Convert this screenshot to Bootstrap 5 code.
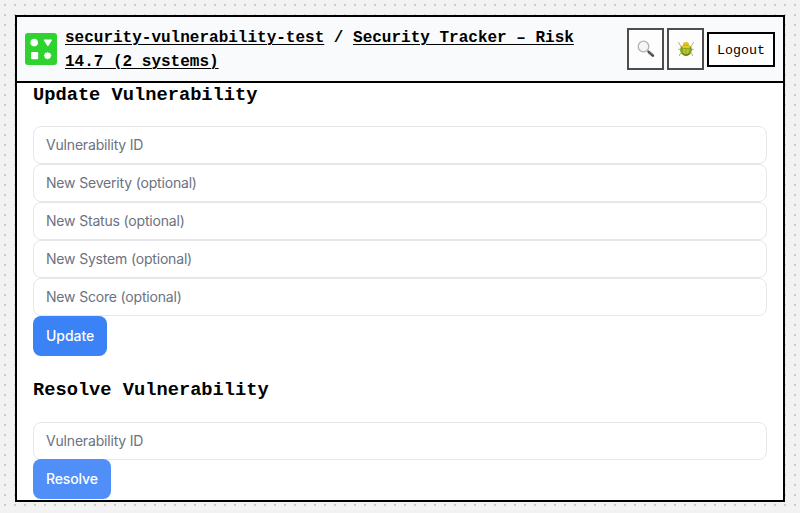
<!DOCTYPE html>
<html lang="en">
<head>
<meta charset="utf-8">
<meta name="viewport" content="width=device-width, initial-scale=1">
<title>Security Tracker</title>
<link rel="stylesheet" href="https://cdn.jsdelivr.net/npm/bootstrap@5.3.0/dist/css/bootstrap.min.css">
<style>
body{height:513px;padding:15px;overflow:hidden;color:#000;font-family:"Liberation Mono",monospace;
 background:url("data:image/svg+xml,%3Csvg xmlns='http://www.w3.org/2000/svg' width='10' height='10'%3E%3Crect x='4' y='4' width='2' height='2' fill='%23ccc'/%3E%3C/svg%3E") #f2f2f2}
.panel{height:487px;border:2px solid #000;background:#fff;overflow:hidden}
.topbar{height:66px;padding:0 8px;border-bottom:2px solid #000;background:#f9fafc}
.crumbs{font-size:16px;line-height:24px;font-weight:700;margin-left:8px;padding-top:2px;width:530px}
.crumbs a{color:#000;text-decoration:underline;text-underline-offset:2px;text-decoration-thickness:1px}
.tools{gap:3px}
.tool{width:37px;height:42px;padding:0;border:2px solid #4d4d4d;border-radius:0;background:#fdfdfd}
.logout{width:68px;height:35px;padding:3px 0 0;border:2px solid #000;border-radius:0;background:#fff;color:#000;font-size:13.333px;line-height:1}
.section-title{font-size:18.72px;line-height:24px;font-weight:700;margin:0 0 19px}
.form-control,.action{font-family:Inter,sans-serif;font-size:14px;line-height:20px}
.form-control{height:38px;padding:7px 12px 9px;border:1px solid #e5e7eb;border-radius:8px;letter-spacing:-.18px}
.form-control::placeholder{color:#6b7280;opacity:1}
.action{height:40px;padding:0 13px;border:0;border-radius:8px;background:#3b82f6;color:#fff;font-weight:500;letter-spacing:-.05px}
.action-light{background:#4f8ff7;letter-spacing:-.12px}
.resolve{padding-top:22px}
.resolve .section-title{margin-bottom:20px}
.resolve .action{margin-top:-1px}
</style>
<script src="https://cdn.jsdelivr.net/npm/bootstrap@5.3.0/dist/js/bootstrap.bundle.min.js"></script>
</head>
<body>
<div class="panel">
 <header class="topbar d-flex align-items-center">
  <svg class="flex-shrink-0" width="32" height="32" viewBox="0 0 32 32" aria-hidden="true">
   <rect width="32" height="32" rx="3" fill="#2fd32f"/>
   <g fill="#fff"><circle cx="9.2" cy="9.6" r="3.8"/><path d="M19.2 6.4h7.2q.9 0 .5.8l-3.4 5.5q-.6.8-1.2 0L18.8 7.2q-.3-.8.4-.8z"/><rect x="6" y="19" width="7.2" height="7.2" rx="1.3"/>
   <path d="M22.6 19l1.2.9 1.4-.1.3 1.4 1 1.4-1 1.4-.3 1.4-1.4.1-1.2.9-1.2-.9-1.4-.1-.3-1.4-1-1.4 1-1.4.3-1.4 1.4.1z"/></g>
  </svg>
  <div class="crumbs"><a href="#">security-vulnerability-test</a> / <a href="#">Security Tracker – Risk 14.7 (2 systems)</a></div>
  <div class="tools d-flex align-items-center ms-auto">
   <button class="tool btn d-flex align-items-center justify-content-center" aria-label="Search">
    <svg width="18" height="18" viewBox="0 0 18 18"><path d="M10.2 10.4l1.8 1.7" stroke="#999" stroke-width="1.4"/><path d="M11.8 12l4 3.5" stroke="#4b4b4d" stroke-width="2.7" stroke-linecap="round"/><path d="M12.3 11.7l3.2 2.8" stroke="#92949a" stroke-width=".7"/><circle cx="6.5" cy="6.5" r="5.3" fill="#f3f6f8" stroke="#b2b3b7" stroke-width="1.3"/><path d="M3.6 5.8q.7-2 2.7-2.5" fill="none" stroke="#fff"/></svg>
   </button>
   <button class="tool btn d-flex align-items-center justify-content-center" aria-label="Report a bug">
    <svg width="18" height="18" viewBox="0 0 18 18"><g fill="none" stroke="#a0ab72" stroke-width=".9"><path d="M5 7.6L3.1 5.2 1.5 2.1M13 7.6l1.9-2.4 1.6-3.1M3.5 9.5L1.2 9.2M14.5 9.5l2.3-.3M4.6 12.6l-1.4 1.2-.9 2.3M13.4 12.6l1.4 1.2.9 2.3"/></g><ellipse cx="9" cy="4.2" rx="2.9" ry="2.3" fill="#d9c326"/><path d="M4 6.3Q9 3.8 14 6.3l1.1 3.5q-.4 5.2-6.1 6.4-5.7-1.2-6.1-6.4z" fill="#86a921"/><path d="M4.8 6.3Q9 4.5 13.2 6.3L12 8.2H6z" fill="#e9cf28"/><path d="M5.6 8.5h6.8L11.6 13 9 14.8 6.4 13z" fill="#c4bf2b"/><path d="M3.8 8.3h10.4M9 8.3v7.4" stroke="#6f8f1d" stroke-width=".5"/><path d="M4 12.3q1.7 3 5 3.8 3.3-.8 5-3.8L9 14.7z" fill="#58861b"/></svg>
   </button>
   <button class="logout btn">Logout</button>
  </div>
 </header>
 <main class="px-3">
  <form class="update">
   <h3 class="section-title">Update Vulnerability</h3>
   <input class="form-control" placeholder="Vulnerability ID">
   <input class="form-control" placeholder="New Severity (optional)">
   <input class="form-control" placeholder="New Status (optional)">
   <input class="form-control" placeholder="New System (optional)">
   <input class="form-control" placeholder="New Score (optional)">
   <button type="button" class="action btn d-block">Update</button>
  </form>
  <form class="resolve">
   <h3 class="section-title">Resolve Vulnerability</h3>
   <input class="form-control" placeholder="Vulnerability ID">
   <button type="button" class="action action-light btn d-block">Resolve</button>
  </form>
 </main>
</div>
</body>
</html>
